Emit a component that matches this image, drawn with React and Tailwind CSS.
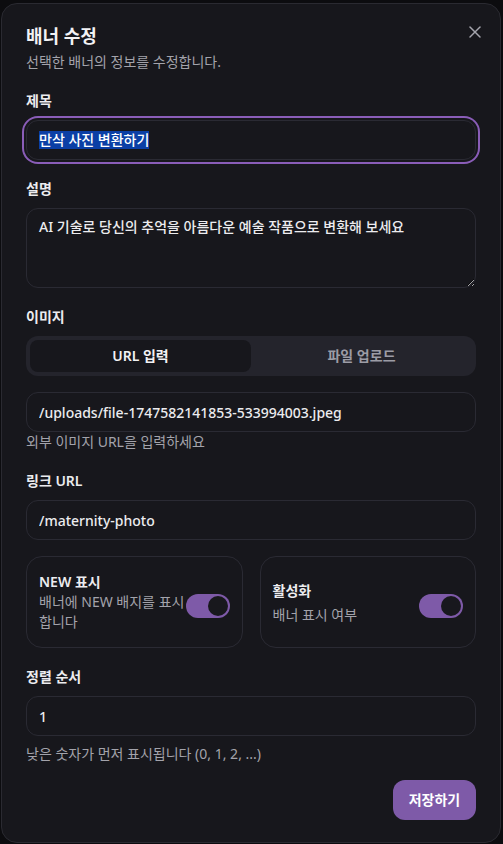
import React from "react";
import { X } from "lucide-react";

const FONT = { fontFamily: '"Noto Sans", "Noto Sans CJK KR", sans-serif' };

function Label({ children, className = "" }) {
  return (
    <div className={`text-sm leading-5 font-semibold text-[#ececef] ${className}`}>
      {children}
    </div>
  );
}

function Field({ value, className = "" }) {
  return (
    <input
      readOnly
      value={value}
      className={`block w-full h-10 rounded-xl border border-[#2a2a33] bg-[#17171c] px-3 text-sm font-medium text-[#ececef] outline-none ${className}`}
    />
  );
}

function Toggle() {
  return (
    <div className="shrink-0 w-11 h-6 rounded-full bg-[#7e5aa8] flex items-center justify-end pr-[2px] mt-[7px]">
      <div className="w-5 h-5 rounded-full bg-[#18181d]" />
    </div>
  );
}

export default function App() {
  return (
    <div className="min-h-screen bg-[#0c0c0f] pt-[3px]" style={FONT}>
      <div className="relative ml-[1px] w-[500px] rounded-2xl border border-[#2a2a31] bg-[#17171c] px-6 pt-[23px] pb-[22px]">
        {/* Close */}
        <button className="absolute top-[18px] right-[15px] text-[#a5a5ad]">
          <X size={20} strokeWidth={1.8} />
        </button>

        <h2 className="text-lg leading-[18px] font-semibold text-[#f2f2f4]">배너 수정</h2>
        <p className="mt-[7px] text-sm leading-5 text-[#a3a3ab]">선택한 배너의 정보를 수정합니다.</p>

        {/* 제목 */}
        <Label className="mt-[19px]">제목</Label>
        <div className="mt-[9px] h-10 rounded-xl border border-[#2a2a33] bg-[#17171c] px-3 flex items-center ring-2 ring-[#8a5db8] ring-offset-2 ring-offset-[#17171c]">
          <span className="bg-[#0b3fa5] text-sm font-medium leading-[18px] text-white">만삭 사진 변환하기</span>
        </div>

        {/* 설명 */}
        <Label className="mt-[19px]">설명</Label>
        <textarea
          readOnly
          defaultValue="AI 기술로 당신의 추억을 아름다운 예술 작품으로 변환해 보세요"
          className="mt-[9px] block w-full h-20 rounded-xl border border-[#2a2a33] bg-[#17171c] px-3 py-2 text-sm font-medium leading-5 text-[#ececef] outline-none"
        />

        {/* 이미지 */}
        <Label className="mt-[19px]">이미지</Label>
        <div className="mt-[9px] h-10 rounded-xl bg-[#24242c] p-1 grid grid-cols-2">
          <div className="rounded-lg bg-[#17171c] flex items-center justify-center text-sm font-semibold text-[#f2f2f4]">
            URL 입력
          </div>
          <div className="flex items-center justify-center text-sm font-semibold text-[#9c9ca5]">
            파일 업로드
          </div>
        </div>

        <Field className="mt-4" value="/uploads/file-1747582141853-533994003.jpeg" />
        <p className="text-sm leading-5 text-[#a3a3ab]">외부 이미지 URL을 입력하세요</p>

        {/* 링크 URL */}
        <Label className="mt-[19px]">링크 URL</Label>
        <Field className="mt-[9px]" value="/maternity-photo" />

        {/* 스위치 카드 */}
        <div className="mt-4 grid grid-cols-2 gap-[17px]">
          <div className="h-[92px] rounded-2xl border border-[#2a2a33] px-3 flex items-center justify-between">
            <div>
              <div className="text-sm leading-5 font-semibold text-[#ececef]">NEW 표시</div>
              <div className="text-sm leading-5 text-[#a3a3ab]">
                배너에 NEW 배지를 표시
                <br />
                합니다
              </div>
            </div>
            <Toggle />
          </div>
          <div className="h-[92px] rounded-2xl border border-[#2a2a33] px-3 flex items-center justify-between">
            <div className="mt-[2px]">
              <div className="text-sm leading-6 font-semibold text-[#ececef]">활성화</div>
              <div className="text-sm leading-6 text-[#a3a3ab]">배너 표시 여부</div>
            </div>
            <Toggle />
          </div>
        </div>

        {/* 정렬 순서 */}
        <Label className="mt-[19px]">정렬 순서</Label>
        <Field className="mt-[9px]" value="1" />
        <p className="mt-2 text-sm leading-5 text-[#a3a3ab]">낮은 숫자가 먼저 표시됩니다 (0, 1, 2, ...)</p>

        <div className="mt-4 flex justify-end">
          <button className="h-10 w-[83px] rounded-xl bg-[#7e5aa8] text-sm font-bold text-white">
            저장하기
          </button>
        </div>
      </div>
    </div>
  );
}
